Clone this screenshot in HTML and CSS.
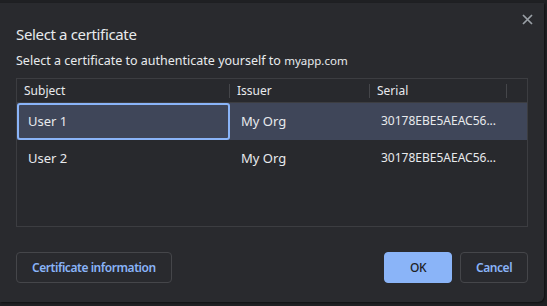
FILE: index.html
```html
<!DOCTYPE html>
<html lang="en">
<head>
    <meta charset="UTF-8">
    <meta name="viewport" content="width=device-width, initial-scale=1.0">
    <link rel="stylesheet" href="styles.css">
    <title>Select a certificate</title>
</head>
<body>
    <div class="dialog">
        <button class="close" aria-label="Close">
            <svg width="11" height="11" viewBox="0 0 11 11">
                <path d="M1 1 L10 10 M10 1 L1 10" stroke="#9aa0a6" stroke-width="1.7" fill="none"/>
            </svg>
        </button>
        <h2 class="title">Select a certificate</h2>
        <p class="subtitle">Select a certificate to authenticate yourself to <span class="host">myapp.com</span></p>
        <div class="cert-table">
            <div class="cert-row header">
                <div class="cell">Subject</div>
                <div class="cell">Issuer</div>
                <div class="cell">Serial</div>
                <div class="cell"></div>
            </div>
            <div class="cert-row item selected">
                <div class="cell focused">User 1</div>
                <div class="cell">My Org</div>
                <div class="cell serial">30178EBE5AEAC56...</div>
                <div class="cell"></div>
            </div>
            <div class="cert-row item">
                <div class="cell">User 2</div>
                <div class="cell">My Org</div>
                <div class="cell serial">30178EBE5AEAC56...</div>
                <div class="cell"></div>
            </div>
        </div>
        <div class="actions">
            <button class="btn">Certificate information</button>
            <div class="right-btns">
                <button class="btn primary">OK</button>
                <button class="btn">Cancel</button>
            </div>
        </div>
    </div>
</body>
</html>
```

FILE: styles.css
```css
body {
    font-family: "Noto Sans", "Open Sans", sans-serif;
    margin: 0;
    padding: 0;
    background-color: #1f2023;
    height: 306px;
    overflow: hidden;
}

.dialog {
    position: relative;
    margin-top: 3px;
    width: 544px;
    height: 299px;
    box-sizing: border-box;
    padding: 20px 16px 19px 16px;
    background-color: #292a2e;
    border-radius: 0 0 6px 0;
    box-shadow: 1px 1px 2px rgba(0, 0, 0, 0.5);
    display: flex;
    flex-direction: column;
    color: #e8eaed;
}

.close {
    position: absolute;
    top: 11px;
    right: 11px;
    width: 11px;
    height: 11px;
    padding: 0;
    border: none;
    background: transparent;
    display: flex;
}

.title {
    margin: 0;
    font-size: 15px;
    font-weight: normal;
    letter-spacing: -0.35px;
    line-height: 22px;
}

.subtitle {
    margin: 7px 0 0 0;
    font-size: 12.5px;
    line-height: 18px;
}

.host {
    font-size: 11.5px;
}

.cert-table {
    margin-top: 8px;
    height: 149px;
    box-sizing: border-box;
    border: 1px solid #3c3d41;
    background-color: #28292d;
}

.cert-row {
    display: grid;
    grid-template-columns: 213px 140px 137px 1fr;
}

.header {
    height: 23px;
    border-bottom: 1px solid #3c3d41;
    font-size: 12px;
    align-items: center;
}

.header .cell {
    padding-left: 7px;
    line-height: 14px;
    border-right: 1px solid #45464a;
}

.header .cell:last-child {
    border-right: none;
}

.item {
    height: 37px;
    font-size: 13px;
    align-items: center;
}

.item .cell {
    padding-left: 11px;
    height: 37px;
    line-height: 36px;
    box-sizing: border-box;
}

.item .cell.serial {
    font-size: 12px;
}

.selected {
    background-color: #3f4659;
}

.focused {
    border: 2px solid #8ab4f8;
    border-radius: 3px;
    line-height: 32px !important;
    padding-left: 9px !important;
    background-color: #3f4659;
}

.actions {
    margin-top: auto;
    display: flex;
    justify-content: space-between;
}

.right-btns {
    display: flex;
    gap: 8px;
}

.btn {
    font-family: "Noto Sans", "Open Sans", sans-serif;
    height: 31px;
    padding: 0 15px;
    font-size: 12px;
    font-weight: 600;
    letter-spacing: -0.45px;
    color: #8ab4f8;
    background-color: transparent;
    border: 1px solid #45464a;
    border-radius: 4px;
    cursor: pointer;
}

.btn.primary {
    background-color: #8ab4f8;
    border-color: #8ab4f8;
    color: #202124;
    font-weight: 500;
}

.right-btns .btn {
    width: 68px;
}
```
